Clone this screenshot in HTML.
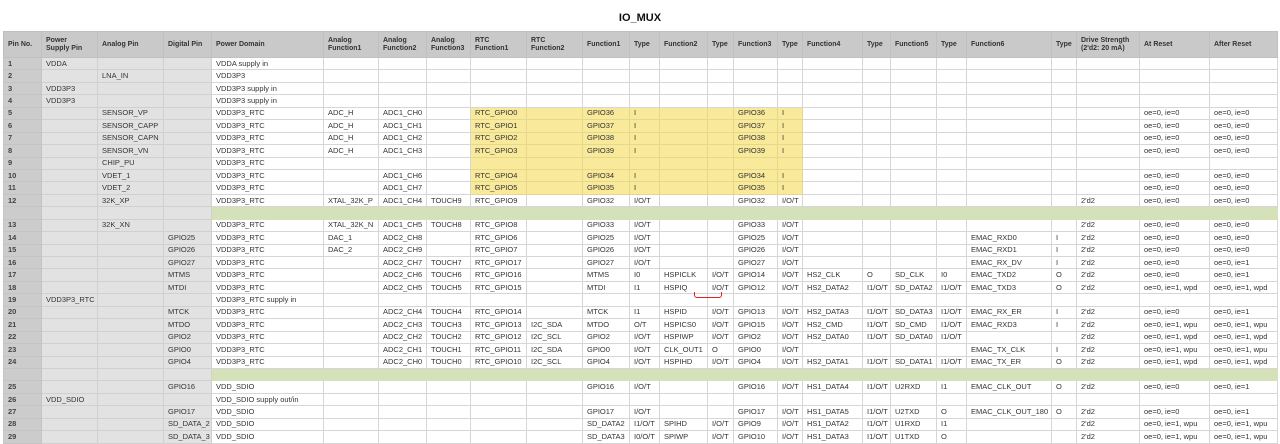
<!DOCTYPE html>
<html><head><meta charset="utf-8"><style>
body{margin:0;width:1280px;height:442px;background:#fff;overflow:hidden;font-family:"Liberation Sans",Arial,sans-serif;color:#333;position:relative}
h1{position:absolute;top:12px;left:0;width:1280px;text-align:center;margin:0;font-size:11px;font-weight:bold;color:#111}
table{position:absolute;left:3px;top:31px;border-collapse:collapse;table-layout:fixed;width:1274px}
td,th{border:1px solid #d6d6d6;padding:0 0 0 4px;font-size:7.5px;white-space:nowrap;overflow:hidden;line-height:8px;text-align:left}
th{height:25px;background:#c9c9c9;font-weight:bold;color:#333;border-color:#c0c0c0;vertical-align:middle;line-height:8px;font-size:7px}
tr.r td{height:11.45px}
td:nth-child(1){background:#cccccc;font-weight:bold;color:#444;border-color:#c4c4c4}
td:nth-child(2),td:nth-child(3),td:nth-child(4){background:#e2e2e2;border-color:#d0d0d0}
tr.yl td:nth-child(n+9):nth-child(-n+16){background:#f8e99b;border-color:#e6d88a}
tr.gr td:nth-child(n+5){background:#d5e2b9;border-color:#d5e2b9}
.red{position:absolute;left:694px;top:292px;width:26px;height:5px;border:1px solid #d22;border-top:none;border-radius:0 0 3px 3px}
</style></head><body>
<h1>IO_MUX</h1>
<table>
<colgroup><col style="width:38px"><col style="width:56px"><col style="width:66px"><col style="width:48px"><col style="width:112px"><col style="width:55px"><col style="width:48px"><col style="width:44px"><col style="width:56px"><col style="width:56px"><col style="width:47px"><col style="width:30px"><col style="width:48px"><col style="width:26px"><col style="width:44px"><col style="width:25px"><col style="width:60px"><col style="width:28px"><col style="width:46px"><col style="width:30px"><col style="width:85px"><col style="width:25px"><col style="width:63px"><col style="width:70px"><col style="width:68px"></colgroup>
<tr><th>Pin No.</th><th>Power<br>Supply Pin</th><th>Analog Pin</th><th>Digital Pin</th><th>Power Domain</th><th>Analog<br>Function1</th><th>Analog<br>Function2</th><th>Analog<br>Function3</th><th>RTC<br>Function1</th><th>RTC<br>Function2</th><th>Function1</th><th>Type</th><th>Function2</th><th>Type</th><th>Function3</th><th>Type</th><th>Function4</th><th>Type</th><th>Function5</th><th>Type</th><th>Function6</th><th>Type</th><th>Drive Strength<br>(2'd2: 20 mA)</th><th>At Reset</th><th>After Reset</th></tr>
<tr class="r"><td>1</td><td>VDDA</td><td></td><td></td><td>VDDA supply in</td><td></td><td></td><td></td><td></td><td></td><td></td><td></td><td></td><td></td><td></td><td></td><td></td><td></td><td></td><td></td><td></td><td></td><td></td><td></td><td></td></tr>
<tr class="r"><td>2</td><td></td><td>LNA_IN</td><td></td><td>VDD3P3</td><td></td><td></td><td></td><td></td><td></td><td></td><td></td><td></td><td></td><td></td><td></td><td></td><td></td><td></td><td></td><td></td><td></td><td></td><td></td><td></td></tr>
<tr class="r"><td>3</td><td>VDD3P3</td><td></td><td></td><td>VDD3P3 supply in</td><td></td><td></td><td></td><td></td><td></td><td></td><td></td><td></td><td></td><td></td><td></td><td></td><td></td><td></td><td></td><td></td><td></td><td></td><td></td><td></td></tr>
<tr class="r"><td>4</td><td>VDD3P3</td><td></td><td></td><td>VDD3P3 supply in</td><td></td><td></td><td></td><td></td><td></td><td></td><td></td><td></td><td></td><td></td><td></td><td></td><td></td><td></td><td></td><td></td><td></td><td></td><td></td><td></td></tr>
<tr class="r yl"><td>5</td><td></td><td>SENSOR_VP</td><td></td><td>VDD3P3_RTC</td><td>ADC_H</td><td>ADC1_CH0</td><td></td><td>RTC_GPIO0</td><td></td><td>GPIO36</td><td>I</td><td></td><td></td><td>GPIO36</td><td>I</td><td></td><td></td><td></td><td></td><td></td><td></td><td></td><td>oe=0, ie=0</td><td>oe=0, ie=0</td></tr>
<tr class="r yl"><td>6</td><td></td><td>SENSOR_CAPP</td><td></td><td>VDD3P3_RTC</td><td>ADC_H</td><td>ADC1_CH1</td><td></td><td>RTC_GPIO1</td><td></td><td>GPIO37</td><td>I</td><td></td><td></td><td>GPIO37</td><td>I</td><td></td><td></td><td></td><td></td><td></td><td></td><td></td><td>oe=0, ie=0</td><td>oe=0, ie=0</td></tr>
<tr class="r yl"><td>7</td><td></td><td>SENSOR_CAPN</td><td></td><td>VDD3P3_RTC</td><td>ADC_H</td><td>ADC1_CH2</td><td></td><td>RTC_GPIO2</td><td></td><td>GPIO38</td><td>I</td><td></td><td></td><td>GPIO38</td><td>I</td><td></td><td></td><td></td><td></td><td></td><td></td><td></td><td>oe=0, ie=0</td><td>oe=0, ie=0</td></tr>
<tr class="r yl"><td>8</td><td></td><td>SENSOR_VN</td><td></td><td>VDD3P3_RTC</td><td>ADC_H</td><td>ADC1_CH3</td><td></td><td>RTC_GPIO3</td><td></td><td>GPIO39</td><td>I</td><td></td><td></td><td>GPIO39</td><td>I</td><td></td><td></td><td></td><td></td><td></td><td></td><td></td><td>oe=0, ie=0</td><td>oe=0, ie=0</td></tr>
<tr class="r yl"><td>9</td><td></td><td>CHIP_PU</td><td></td><td>VDD3P3_RTC</td><td></td><td></td><td></td><td></td><td></td><td></td><td></td><td></td><td></td><td></td><td></td><td></td><td></td><td></td><td></td><td></td><td></td><td></td><td></td><td></td></tr>
<tr class="r yl"><td>10</td><td></td><td>VDET_1</td><td></td><td>VDD3P3_RTC</td><td></td><td>ADC1_CH6</td><td></td><td>RTC_GPIO4</td><td></td><td>GPIO34</td><td>I</td><td></td><td></td><td>GPIO34</td><td>I</td><td></td><td></td><td></td><td></td><td></td><td></td><td></td><td>oe=0, ie=0</td><td>oe=0, ie=0</td></tr>
<tr class="r yl"><td>11</td><td></td><td>VDET_2</td><td></td><td>VDD3P3_RTC</td><td></td><td>ADC1_CH7</td><td></td><td>RTC_GPIO5</td><td></td><td>GPIO35</td><td>I</td><td></td><td></td><td>GPIO35</td><td>I</td><td></td><td></td><td></td><td></td><td></td><td></td><td></td><td>oe=0, ie=0</td><td>oe=0, ie=0</td></tr>
<tr class="r"><td>12</td><td></td><td>32K_XP</td><td></td><td>VDD3P3_RTC</td><td>XTAL_32K_P</td><td>ADC1_CH4</td><td>TOUCH9</td><td>RTC_GPIO9</td><td></td><td>GPIO32</td><td>I/O/T</td><td></td><td></td><td>GPIO32</td><td>I/O/T</td><td></td><td></td><td></td><td></td><td></td><td></td><td>2'd2</td><td>oe=0, ie=0</td><td>oe=0, ie=0</td></tr>
<tr class="r gr"><td></td><td></td><td></td><td></td><td></td><td></td><td></td><td></td><td></td><td></td><td></td><td></td><td></td><td></td><td></td><td></td><td></td><td></td><td></td><td></td><td></td><td></td><td></td><td></td><td></td></tr>
<tr class="r"><td>13</td><td></td><td>32K_XN</td><td></td><td>VDD3P3_RTC</td><td>XTAL_32K_N</td><td>ADC1_CH5</td><td>TOUCH8</td><td>RTC_GPIO8</td><td></td><td>GPIO33</td><td>I/O/T</td><td></td><td></td><td>GPIO33</td><td>I/O/T</td><td></td><td></td><td></td><td></td><td></td><td></td><td>2'd2</td><td>oe=0, ie=0</td><td>oe=0, ie=0</td></tr>
<tr class="r"><td>14</td><td></td><td></td><td>GPIO25</td><td>VDD3P3_RTC</td><td>DAC_1</td><td>ADC2_CH8</td><td></td><td>RTC_GPIO6</td><td></td><td>GPIO25</td><td>I/O/T</td><td></td><td></td><td>GPIO25</td><td>I/O/T</td><td></td><td></td><td></td><td></td><td>EMAC_RXD0</td><td>I</td><td>2'd2</td><td>oe=0, ie=0</td><td>oe=0, ie=0</td></tr>
<tr class="r"><td>15</td><td></td><td></td><td>GPIO26</td><td>VDD3P3_RTC</td><td>DAC_2</td><td>ADC2_CH9</td><td></td><td>RTC_GPIO7</td><td></td><td>GPIO26</td><td>I/O/T</td><td></td><td></td><td>GPIO26</td><td>I/O/T</td><td></td><td></td><td></td><td></td><td>EMAC_RXD1</td><td>I</td><td>2'd2</td><td>oe=0, ie=0</td><td>oe=0, ie=0</td></tr>
<tr class="r"><td>16</td><td></td><td></td><td>GPIO27</td><td>VDD3P3_RTC</td><td></td><td>ADC2_CH7</td><td>TOUCH7</td><td>RTC_GPIO17</td><td></td><td>GPIO27</td><td>I/O/T</td><td></td><td></td><td>GPIO27</td><td>I/O/T</td><td></td><td></td><td></td><td></td><td>EMAC_RX_DV</td><td>I</td><td>2'd2</td><td>oe=0, ie=0</td><td>oe=0, ie=1</td></tr>
<tr class="r"><td>17</td><td></td><td></td><td>MTMS</td><td>VDD3P3_RTC</td><td></td><td>ADC2_CH6</td><td>TOUCH6</td><td>RTC_GPIO16</td><td></td><td>MTMS</td><td>I0</td><td>HSPICLK</td><td>I/O/T</td><td>GPIO14</td><td>I/O/T</td><td>HS2_CLK</td><td>O</td><td>SD_CLK</td><td>I0</td><td>EMAC_TXD2</td><td>O</td><td>2'd2</td><td>oe=0, ie=0</td><td>oe=0, ie=1</td></tr>
<tr class="r"><td>18</td><td></td><td></td><td>MTDI</td><td>VDD3P3_RTC</td><td></td><td>ADC2_CH5</td><td>TOUCH5</td><td>RTC_GPIO15</td><td></td><td>MTDI</td><td>I1</td><td>HSPIQ</td><td>I/O/T</td><td>GPIO12</td><td>I/O/T</td><td>HS2_DATA2</td><td>I1/O/T</td><td>SD_DATA2</td><td>I1/O/T</td><td>EMAC_TXD3</td><td>O</td><td>2'd2</td><td>oe=0, ie=1, wpd</td><td>oe=0, ie=1, wpd</td></tr>
<tr class="r"><td>19</td><td>VDD3P3_RTC</td><td></td><td></td><td>VDD3P3_RTC supply in</td><td></td><td></td><td></td><td></td><td></td><td></td><td></td><td></td><td></td><td></td><td></td><td></td><td></td><td></td><td></td><td></td><td></td><td></td><td></td><td></td></tr>
<tr class="r"><td>20</td><td></td><td></td><td>MTCK</td><td>VDD3P3_RTC</td><td></td><td>ADC2_CH4</td><td>TOUCH4</td><td>RTC_GPIO14</td><td></td><td>MTCK</td><td>I1</td><td>HSPID</td><td>I/O/T</td><td>GPIO13</td><td>I/O/T</td><td>HS2_DATA3</td><td>I1/O/T</td><td>SD_DATA3</td><td>I1/O/T</td><td>EMAC_RX_ER</td><td>I</td><td>2'd2</td><td>oe=0, ie=0</td><td>oe=0, ie=1</td></tr>
<tr class="r"><td>21</td><td></td><td></td><td>MTDO</td><td>VDD3P3_RTC</td><td></td><td>ADC2_CH3</td><td>TOUCH3</td><td>RTC_GPIO13</td><td>I2C_SDA</td><td>MTDO</td><td>O/T</td><td>HSPICS0</td><td>I/O/T</td><td>GPIO15</td><td>I/O/T</td><td>HS2_CMD</td><td>I1/O/T</td><td>SD_CMD</td><td>I1/O/T</td><td>EMAC_RXD3</td><td>I</td><td>2'd2</td><td>oe=0, ie=1, wpu</td><td>oe=0, ie=1, wpu</td></tr>
<tr class="r"><td>22</td><td></td><td></td><td>GPIO2</td><td>VDD3P3_RTC</td><td></td><td>ADC2_CH2</td><td>TOUCH2</td><td>RTC_GPIO12</td><td>I2C_SCL</td><td>GPIO2</td><td>I/O/T</td><td>HSPIWP</td><td>I/O/T</td><td>GPIO2</td><td>I/O/T</td><td>HS2_DATA0</td><td>I1/O/T</td><td>SD_DATA0</td><td>I1/O/T</td><td></td><td></td><td>2'd2</td><td>oe=0, ie=1, wpd</td><td>oe=0, ie=1, wpd</td></tr>
<tr class="r"><td>23</td><td></td><td></td><td>GPIO0</td><td>VDD3P3_RTC</td><td></td><td>ADC2_CH1</td><td>TOUCH1</td><td>RTC_GPIO11</td><td>I2C_SDA</td><td>GPIO0</td><td>I/O/T</td><td>CLK_OUT1</td><td>O</td><td>GPIO0</td><td>I/O/T</td><td></td><td></td><td></td><td></td><td>EMAC_TX_CLK</td><td>I</td><td>2'd2</td><td>oe=0, ie=1, wpu</td><td>oe=0, ie=1, wpu</td></tr>
<tr class="r"><td>24</td><td></td><td></td><td>GPIO4</td><td>VDD3P3_RTC</td><td></td><td>ADC2_CH0</td><td>TOUCH0</td><td>RTC_GPIO10</td><td>I2C_SCL</td><td>GPIO4</td><td>I/O/T</td><td>HSPIHD</td><td>I/O/T</td><td>GPIO4</td><td>I/O/T</td><td>HS2_DATA1</td><td>I1/O/T</td><td>SD_DATA1</td><td>I1/O/T</td><td>EMAC_TX_ER</td><td>O</td><td>2'd2</td><td>oe=0, ie=1, wpd</td><td>oe=0, ie=1, wpd</td></tr>
<tr class="r gr"><td></td><td></td><td></td><td></td><td></td><td></td><td></td><td></td><td></td><td></td><td></td><td></td><td></td><td></td><td></td><td></td><td></td><td></td><td></td><td></td><td></td><td></td><td></td><td></td><td></td></tr>
<tr class="r"><td>25</td><td></td><td></td><td>GPIO16</td><td>VDD_SDIO</td><td></td><td></td><td></td><td></td><td></td><td>GPIO16</td><td>I/O/T</td><td></td><td></td><td>GPIO16</td><td>I/O/T</td><td>HS1_DATA4</td><td>I1/O/T</td><td>U2RXD</td><td>I1</td><td>EMAC_CLK_OUT</td><td>O</td><td>2'd2</td><td>oe=0, ie=0</td><td>oe=0, ie=1</td></tr>
<tr class="r"><td>26</td><td>VDD_SDIO</td><td></td><td></td><td>VDD_SDIO supply out/in</td><td></td><td></td><td></td><td></td><td></td><td></td><td></td><td></td><td></td><td></td><td></td><td></td><td></td><td></td><td></td><td></td><td></td><td></td><td></td><td></td></tr>
<tr class="r"><td>27</td><td></td><td></td><td>GPIO17</td><td>VDD_SDIO</td><td></td><td></td><td></td><td></td><td></td><td>GPIO17</td><td>I/O/T</td><td></td><td></td><td>GPIO17</td><td>I/O/T</td><td>HS1_DATA5</td><td>I1/O/T</td><td>U2TXD</td><td>O</td><td>EMAC_CLK_OUT_180</td><td>O</td><td>2'd2</td><td>oe=0, ie=0</td><td>oe=0, ie=1</td></tr>
<tr class="r"><td>28</td><td></td><td></td><td>SD_DATA_2</td><td>VDD_SDIO</td><td></td><td></td><td></td><td></td><td></td><td>SD_DATA2</td><td>I1/O/T</td><td>SPIHD</td><td>I/O/T</td><td>GPIO9</td><td>I/O/T</td><td>HS1_DATA2</td><td>I1/O/T</td><td>U1RXD</td><td>I1</td><td></td><td></td><td>2'd2</td><td>oe=0, ie=1, wpu</td><td>oe=0, ie=1, wpu</td></tr>
<tr class="r"><td>29</td><td></td><td></td><td>SD_DATA_3</td><td>VDD_SDIO</td><td></td><td></td><td></td><td></td><td></td><td>SD_DATA3</td><td>I0/O/T</td><td>SPIWP</td><td>I/O/T</td><td>GPIO10</td><td>I/O/T</td><td>HS1_DATA3</td><td>I1/O/T</td><td>U1TXD</td><td>O</td><td></td><td></td><td>2'd2</td><td>oe=0, ie=1, wpu</td><td>oe=0, ie=1, wpu</td></tr>
</table>
<div class="red"></div>
</body></html>
